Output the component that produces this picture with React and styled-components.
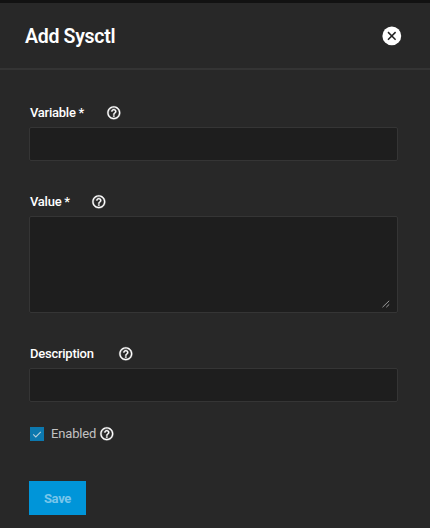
import React from "react";
import styled, { createGlobalStyle } from "styled-components";

const GlobalStyle = createGlobalStyle`
  * { box-sizing: border-box; }
  body { margin: 0; background: #282828; }
`;

const Panel = styled.main`
  width: 430px;
  height: 528px;
  overflow: hidden;
  background: #282828;
  border-top: 3px solid #121212;
  color: #fff;
  font-family: Roboto, sans-serif;
`;

const Header = styled.header`
  display: flex;
  align-items: center;
  justify-content: space-between;
  height: 67px;
  padding: 0 28px 0 25px;
  border-bottom: 2px solid #343434;
`;

const Title = styled.h1`
  margin: 0;
  padding-top: 2px;
  font: 600 19.5px/24px Roboto, sans-serif;
  letter-spacing: -0.3px;
`;

const CloseButton = styled.button`
  width: 20px;
  height: 20px;
  padding: 0;
  border: 0;
  background: none;
  svg { display: block; }
`;

const Form = styled.form`
  padding: 33px 32px 0 29px;
`;

const Field = styled.div`
  margin-bottom: ${(p) => p.$gap}px;
`;

const LabelRow = styled.div`
  display: flex;
  align-items: center;
  height: 20px;
  margin-bottom: 4px;
  padding-left: 1px;
`;

const Label = styled.label`
  flex: none;
  width: ${(p) => p.$width}px;
  white-space: nowrap;
  font-size: 13px;
  line-height: 18px;
  padding-bottom: 1px;
  font-weight: ${(p) => (p.$muted ? 400 : 500)};
  letter-spacing: ${(p) => p.$spacing || 0}px;
  color: ${(p) => (p.$muted ? "#c2c2c2" : "#fff")};
`;

const Input = styled.input`
  display: block;
  width: 369px;
  height: 34px;
  border: 1px solid #353535;
  border-radius: 2px;
  background: #1e1e1e;
  color: #fff;
  outline: none;
`;

const AreaBox = styled.div`
  position: relative;
  height: 97px;
`;

const TextArea = styled.textarea`
  display: block;
  width: 369px;
  height: 97px;
  resize: none;
  border: 1px solid #353535;
  border-radius: 2px;
  background: #1e1e1e;
  color: #fff;
  outline: none;
`;

const Grip = styled.svg`
  position: absolute;
  right: 8px;
  bottom: 5px;
`;

const CheckRow = styled.div`
  display: flex;
  align-items: center;
  height: 20px;
  padding-left: 1px;
`;

const CheckBox = styled.span`
  width: 14px;
  height: 14px;
  margin-right: 7px;
  background: #0c78ae;
  svg { display: block; }
`;

const SaveButton = styled.button`
  display: block;
  width: 57px;
  height: 34px;
  margin-top: 37px;
  padding: 1px 0 0;
  border: 0;
  background: #0095d9;
  color: #78c6eb;
  font: 700 13px/33px Roboto, sans-serif;
  letter-spacing: -0.3px;
`;

function HelpIcon() {
  return (
    <svg width="15.6" height="15.6" viewBox="0 0 24 24" fill="#fff" stroke="#fff" strokeWidth="0.5">
      <path d="M11 18h2v-2h-2v2zm1-16C6.48 2 2 6.48 2 12s4.48 10 10 10 10-4.48 10-10S17.52 2 12 2zm0 18c-4.41 0-8-3.59-8-8s3.59-8 8-8 8 3.59 8 8-3.59 8-8 8zm0-14c-2.21 0-4 1.79-4 4h2c0-1.1.9-2 2-2s2 .9 2 2c0 2-3 1.75-3 5h2c0-2.25 3-2.5 3-5 0-2.21-1.79-4-4-4z" />
    </svg>
  );
}

export default function App() {
  return (
    <>
      <GlobalStyle />
      <Panel>
        <Header>
          <Title>Add Sysctl</Title>
          <CloseButton aria-label="Close">
            <svg width="20" height="20" viewBox="0 0 20 20">
              <circle cx="9.8" cy="9.9" r="9.4" fill="#fff" />
              <path d="M6 6.1l7.6 7.6M13.6 6.1L6 13.7" stroke="#222" strokeWidth="1.5" />
            </svg>
          </CloseButton>
        </Header>
        <Form>
          <Field $gap={31}>
            <LabelRow>
              <Label $width={75.5} $spacing={-0.25}>Variable *</Label>
              <HelpIcon />
            </LabelRow>
            <Input />
          </Field>
          <Field $gap={31}>
            <LabelRow>
              <Label $width={61} $spacing={-0.25}>Value *</Label>
              <HelpIcon />
            </LabelRow>
            <AreaBox>
              <TextArea />
              <Grip width="8" height="8" viewBox="0 0 8 8" stroke="#aaa" strokeWidth="0.9">
                <path d="M0.5 7.2L7.2 0.8M4.3 7.2L7.2 4.4" />
              </Grip>
            </AreaBox>
          </Field>
          <Field $gap={22}>
            <LabelRow>
              <Label $width={88} $spacing={-0.25}>Description</Label>
              <HelpIcon />
            </LabelRow>
            <Input />
          </Field>
          <CheckRow>
            <CheckBox>
              <svg width="14" height="14" fill="none" stroke="#b7cfdb" strokeWidth="1.1">
                <path d="M3.2 7.4l2.6 2.5 5-5" />
              </svg>
            </CheckBox>
            <Label $width={48} $spacing={-0.15} $muted>Enabled</Label>
            <HelpIcon />
          </CheckRow>
          <SaveButton type="button">Save</SaveButton>
        </Form>
      </Panel>
    </>
  );
}
